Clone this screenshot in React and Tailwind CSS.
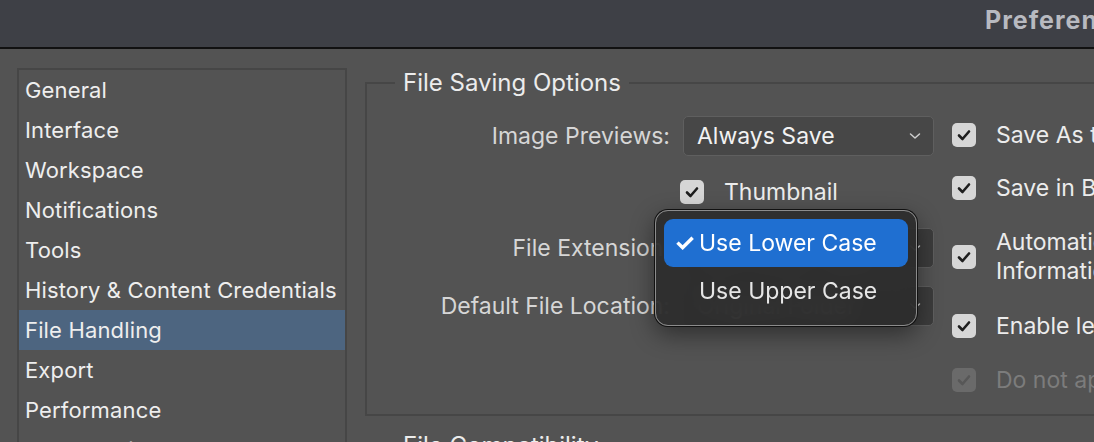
import React from "react";

const font = { fontFamily: "Inter, 'Noto Sans', sans-serif" };

function Check({ dim }) {
  return (
    <div
      className={`w-[24px] h-[24px] rounded-[5px] flex items-center justify-center shrink-0 ${
        dim ? "bg-[#6a6a6a]" : "bg-[#d6d6d6]"
      }`}
    >
      <svg width="14" height="12" viewBox="0 0 14 12">
        <path
          d="M2 6.5 L5.5 10 L12 2.5"
          fill="none"
          stroke={dim ? "#575757" : "#1e1e1e"}
          strokeWidth="2.6"
          strokeLinecap="round"
          strokeLinejoin="round"
        />
      </svg>
    </div>
  );
}

function Chevron() {
  return (
    <svg width="12" height="8" viewBox="0 0 12 8">
      <path d="M1.5 2 L6 6 L10.5 2" fill="none" stroke="#cfcfcf" strokeWidth="1.5" strokeLinecap="round" strokeLinejoin="round" />
    </svg>
  );
}

function Select({ value, dark }) {
  return (
    <div
      className={`w-[251px] h-[40px] rounded-[5px] border border-[#5f5f5f] flex items-center justify-between pl-[13px] pr-[12px] ${
        dark ? "bg-[#3c3c3c]" : "bg-[#474747]"
      }`}
    >
      <span className="text-[23px] text-[#f2f2f2] whitespace-nowrap">{value}</span>
      <Chevron />
    </div>
  );
}

const items = [
  "General",
  "Interface",
  "Workspace",
  "Notifications",
  "Tools",
  "History & Content Credentials",
  "File Handling",
  "Export",
  "Performance",
  "Scratch Disks",
];

export default function App() {
  return (
    <div className="w-[1094px] h-[442px] overflow-hidden bg-[#535353] flex flex-col" style={font}>
      <div className="h-[49px] shrink-0 bg-[#3e4046] border-b-2 border-[#111] flex items-start">
        <span className="ml-[985px] mt-[2px] whitespace-nowrap text-[25px] tracking-[1px] font-bold text-[#b8bac0]">
          Preferences
        </span>
      </div>
      <div className="flex flex-1 min-h-0">
        <div className="ml-[17px] mt-[19px] w-[330px] h-[420px] shrink-0 border-2 border-[#464646]">
          {items.map((it) => (
            <div
              key={it}
              className={`h-[40px] flex items-center pl-[6px] text-[22px] tracking-[0.15px] text-[#eeeeee] whitespace-nowrap ${
                it === "File Handling" ? "bg-[#4d6580]" : ""
              }`}
            >
              {it}
            </div>
          ))}
        </div>
        <div className="ml-[18px] flex flex-col shrink-0">
          <fieldset className="mt-[19px] w-[760px] h-[348px] shrink-0 border-2 border-[#464646] pb-0">
            <legend className="ml-[28px] px-[8px] text-[24px] leading-[30px] text-[#ececec]">File Saving Options</legend>
            <div className="relative flex mt-[18px]">
              <div className="flex flex-col w-[567px]">
                <div className="flex items-center h-[40px]">
                  <span className="w-[303px] text-right text-[23px] text-[#d6d6d6] whitespace-nowrap">Image Previews:</span>
                  <div className="ml-[13px]">
                    <Select value="Always Save" />
                  </div>
                </div>
                <div className="flex items-center h-[40px] mt-[16px]">
                  <div className="ml-[313px]">
                    <Check />
                  </div>
                  <span className="ml-[20px] text-[23px] text-[#ececec]">Thumbnail</span>
                </div>
                <div className="flex items-center h-[40px] mt-[16px]">
                  <span className="w-[303px] text-right text-[23px] text-[#d6d6d6] whitespace-nowrap">File Extension:</span>
                  <div className="ml-[13px]">
                    <Select value="Use Lower Case" dark />
                  </div>
                </div>
                <div className="flex items-center h-[40px] mt-[18px]">
                  <span className="w-[303px] text-right text-[23px] text-[#d6d6d6] whitespace-nowrap">Default File Location:</span>
                  <div className="ml-[13px]">
                    <Select value="Original Folder" dark />
                  </div>
                </div>
              </div>
              <div className="flex flex-col ml-[18px] text-[23px] whitespace-nowrap">
                <div className="flex items-center h-[40px] -mt-[1px]">
                  <Check />
                  <span className="ml-[20px] text-[#ececec]">Save As to Original Folder</span>
                </div>
                <div className="flex items-center h-[40px] mt-[13px]">
                  <Check />
                  <span className="ml-[20px] text-[#ececec]">Save in Background</span>
                </div>
                <div className="flex items-center mt-[20px]">
                  <Check />
                  <span className="ml-[20px] text-[#ececec] leading-[29px]">
                    Automatically Save Recovery
                    <br />
                    Information Every:
                  </span>
                </div>
                <div className="flex items-center h-[40px] mt-[20px]">
                  <Check />
                  <span className="ml-[20px] text-[#ececec]">Enable legacy "Save As"</span>
                </div>
                <div className="flex items-center h-[40px] mt-[14px]">
                  <Check dim />
                  <span className="ml-[20px] text-[#7c7c7c]">Do not append "copy" to filename</span>
                </div>
              </div>
              <div className="absolute left-[288px] top-[94px] w-[262px] h-[116px] rounded-[13px] bg-[#2b2b2b]/90 backdrop-blur-md border border-[#8c8c8c] shadow-[0_0_0_1px_#111,0_8px_24px_rgba(0,0,0,0.45)] p-[8px] flex flex-col">
                <div className="h-[48px] rounded-[9px] bg-[#1f6fd1] flex items-center pl-[10px] text-[23px] text-white whitespace-nowrap">
                  <span className="w-[25px] text-[24px] font-bold leading-none">✓</span>
                  <span>Use Lower Case</span>
                </div>
                <div className="h-[48px] flex items-center pl-[35px] text-[23px] text-[#e6e6e6] whitespace-nowrap">Use Upper Case</div>
              </div>
            </div>
          </fieldset>
          <div className="mt-[12px] ml-[38px] text-[24px] text-[#ececec] whitespace-nowrap shrink-0">File Compatibility</div>
        </div>
      </div>
    </div>
  );
}
